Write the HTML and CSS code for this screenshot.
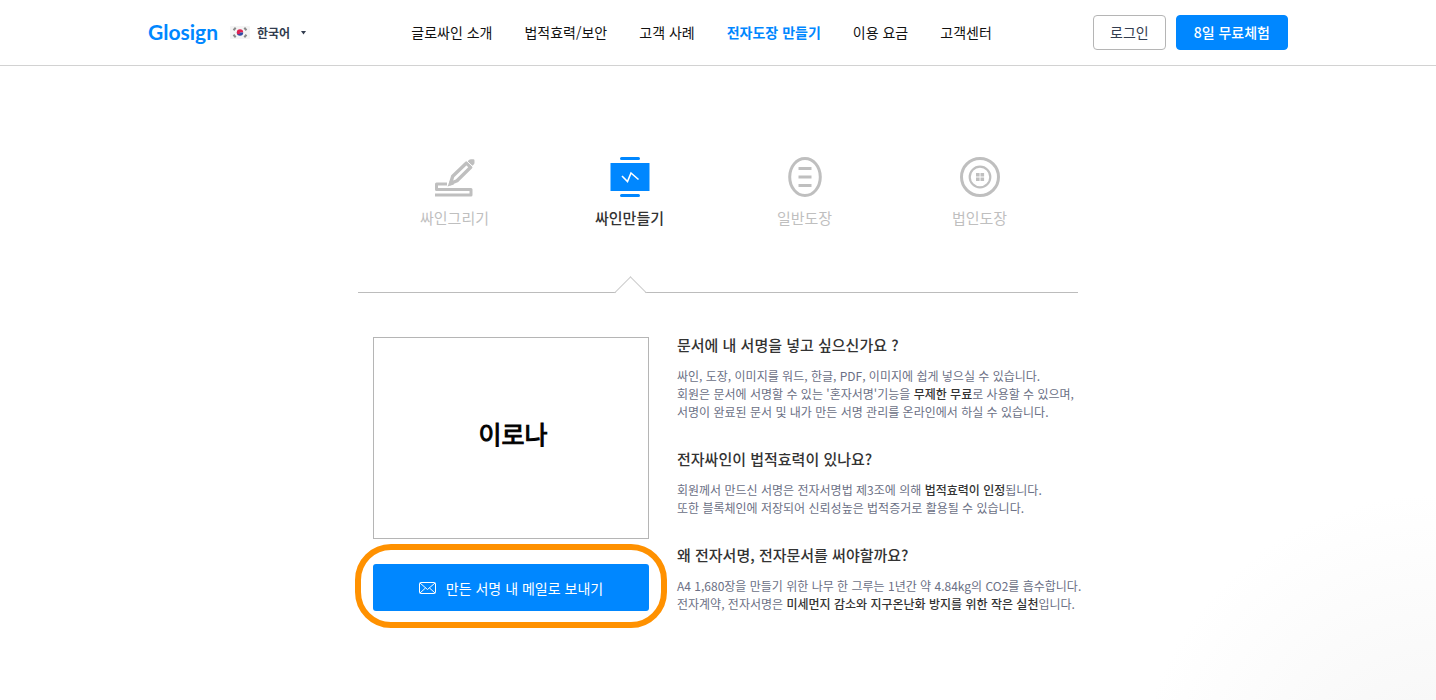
FILE: index.html
```html
<!DOCTYPE html>
<html lang="ko">

<head>
    <meta charset="UTF-8">
    <meta name="viewport" content="width=device-width, initial-scale=1">
    <title>Glosign</title>
    <link rel="stylesheet" href="styles.css">
</head>

<body>
    <!--header-->
    <header class="header">
        <div class="header-inner">
            <div class="brand">
                <a class="logo" href="#">Glosign</a>
                <div class="lang">
                    <svg class="flag" viewBox="0 0 20 13" aria-hidden="true">
                        <rect width="20" height="13" rx="1" fill="#f4f4f4"/>
                        <path d="M6.8 6.5a3.2 3.2 0 0 1 6.4 0z" fill="#e0204f"/>
                        <path d="M6.8 6.5a3.2 3.2 0 0 0 6.4 0z" fill="#2f4aa5"/>
                        <circle cx="8.4" cy="6.7" r="1.6" fill="#e0204f"/>
                        <path d="M3.500 4.200l2.200-2.400M14.300 1.800l2.200 2.400M3.500 8.800l2.200 2.400M14.300 11.200l2.200-2.400" stroke="#8a8a8a" stroke-width="2"/>
                    </svg>
                    <select class="lang-select" aria-label="언어">
                        <option>한국어</option>
                    </select>
                    <svg class="caret" viewBox="0 0 5 4" aria-hidden="true"><path d="M0 0h5L2.500 3.500z" fill="#333d4f"/></svg>
                </div>
            </div>
            <nav class="nav">
                <a href="#">글로싸인 소개</a>
                <a href="#">법적효력/보안</a>
                <a href="#">고객 사례</a>
                <a class="on" href="#">전자도장 만들기</a>
                <a href="#">이용 요금</a>
                <a href="#">고객센터</a>
            </nav>
            <div class="account">
                <button class="btn login" type="button">로그인</button>
                <button class="btn trial" type="button">8일 무료체험</button>
            </div>
        </div>
    </header>
    <!--header end-->

    <main class="main">
        <!--tabs-->
        <nav class="tabs">
            <a class="tab" href="#">
                <svg viewBox="0 0 40 40" fill="none" stroke="#bfbfbf" stroke-width="3">
                    <path d="M12 27H1.500v5.500H36V38H0" stroke-linejoin="round"/>
                    <path d="M15.500 26.500l2.200-7.200L31.500 6l4.200 4.200L22 23.800z" stroke-width="3.400" stroke-linejoin="round"/>
                    <path d="M12.500 29.500l2.500-6 4 4z" fill="#bfbfbf" stroke="none"/>
                    <path d="M32.500 4.500l1.200-1.200Q34.600 2.200 36 2.200h2.200q1.300 0 1.300 1.300v2.300q0 1-.8 1.800l-1.200 1.200z" fill="#bfbfbf" stroke="none"/>
                    <path d="M31.200 3.300l7 7" stroke="#fff" stroke-width="1"/>
                </svg>
                <span>싸인그리기</span>
            </a>
            <a class="tab active" href="#">
                <svg viewBox="0 0 40 40" fill="none">
                    <path d="M11.500 1.500h17M11.500 38.500h17" stroke="#0087ff" stroke-width="3" stroke-linecap="round"/>
                    <rect x=".5" y="6" width="39" height="28" fill="#0087ff"/>
                    <path d="M12 19l5.500 5.500 3.500-8.500 7.500 6.500" stroke="#fff" stroke-width="1.600"/>
                </svg>
                <span>싸인만들기</span>
            </a>
            <a class="tab" href="#">
                <svg viewBox="0 0 40 40" fill="none" stroke="#bfbfbf" stroke-width="3">
                    <ellipse cx="20" cy="20" rx="15.300" ry="18.500"/>
                    <path d="M13.500 11.500h13M13.500 20h13M13.500 28.500h13"/>
                </svg>
                <span>일반도장</span>
            </a>
            <a class="tab" href="#">
                <svg viewBox="0 0 40 40" fill="none" stroke="#bfbfbf">
                    <circle cx="20" cy="20" r="18.500" stroke-width="3"/>
                    <circle cx="20" cy="20" r="10.300" stroke-width="2.200"/>
                    <path d="M16 16h3.600v3.600H16zM20.500 16h3.600v3.600h-3.600zM16 20.500h3.600v3.600H16zM20.500 20.500h3.600v3.600h-3.600z" fill="#bfbfbf" stroke="none"/>
                </svg>
                <span>법인도장</span>
            </a>
        </nav>
        <!--tabs end-->

        <section class="content">
            <div class="maker">
                <div class="preview">이로나</div>
                <div class="highlight">
                    <button class="send" type="button">
                        <svg viewBox="0 0 17 12" fill="none" stroke="#fff">
                            <rect x=".5" y=".5" width="16" height="11" rx="1"/>
                            <path d="M1 1l7.500 6.500L16 1M1 11l5.500-5M16 11l-5.500-5"/>
                        </svg>
                        만든 서명 내 메일로 보내기
                    </button>
                </div>
            </div>
            <div class="guide">
                <article>
                    <h2>문서에 내 서명을 넣고 싶으신가요 ?</h2>
                    <p>싸인, 도장, 이미지를 워드, 한글, PDF, 이미지에 쉽게 넣으실 수 있습니다.<br>
                        회원은 문서에 서명할 수 있는 '혼자서명'기능을 <strong>무제한 무료</strong>로 사용할 수 있으며,<br>
                        서명이 완료된 문서 및 내가 만든 서명 관리를 온라인에서 하실 수 있습니다.</p>
                </article>
                <article>
                    <h2>전자싸인이 법적효력이 있나요?</h2>
                    <p>회원께서 만드신 서명은 전자서명법 제3조에 의해 <strong>법적효력이 인정</strong>됩니다.<br>
                        또한 블록체인에 저장되어 신뢰성높은 법적증거로 활용될 수 있습니다.</p>
                </article>
                <article>
                    <h2>왜 전자서명, 전자문서를 써야할까요?</h2>
                    <p>A4 1,680장을 만들기 위한 나무 한 그루는 1년간 약 4.84kg의 CO2를 흡수합니다.<br>
                        전자계약, 전자서명은 <strong>미세먼지 감소와 지구온난화 방지를 위한 작은 실천</strong>입니다.</p>
                </article>
            </div>
        </section>
    </main>
</body>

</html>
```
FILE: styles.css
```css
* {
    box-sizing: border-box;
}

body {
    margin: 0;
    min-height: 100vh;
    font-family: "Noto Sans CJK KR", sans-serif;
    font-size: 14px;
    color: #111;
    background: #fff radial-gradient(circle at 100% calc(100% + 94px), #f5f5f5 0, #fff 300px) no-repeat;
}

a {
    color: inherit;
    text-decoration: none;
}

button,
select {
    font-family: inherit;
    cursor: pointer;
}

/*header*/
.header {
    border-bottom: 1px solid #d2d2d2;
    background: #fff;
}

.header-inner {
    max-width: 1140px;
    height: 65px;
    margin: 0 auto;
    display: flex;
    align-items: center;
    justify-content: space-between;
}

.brand,
.lang,
.account {
    display: flex;
    align-items: center;
}

.brand {
    gap: 12px;
}

.logo {
    font-family: Lato, sans-serif;
    font-size: 21px;
    font-weight: 700;
    line-height: 28px;
    padding-bottom: 2px;
    color: #0087ff;
}

.lang {
    position: relative;
}

.flag {
    width: 20px;
    height: 13px;
}

.lang-select {
    appearance: none;
    border: 0;
    background: none;
    width: 60px;
    padding: 0 0 0 7px;
    font-size: 12px;
    font-weight: 700;
    color: #333d4f;
}

.caret {
    position: absolute;
    right: 4px;
    width: 5px;
    height: 4px;
    pointer-events: none;
}

.nav {
    display: flex;
    gap: 32px;
    padding-bottom: 2px;
    line-height: 20px;
    white-space: nowrap;
}

.nav .on {
    color: #0087ff;
    font-weight: 700;
}

.account {
    gap: 10px;
}

.btn {
    height: 35px;
    padding: 0 16px 2px;
    border: 1px solid #b5b5b5;
    border-radius: 4px;
    background: #fff;
    font-size: 14px;
    color: #333d4f;
    white-space: nowrap;
}

.trial {
    padding: 0 17px 2px;
    border-color: #0087ff;
    background: #0087ff;
    color: #fff;
    font-weight: 500;
}

/*tabs*/
.main {
    max-width: 720px;
    margin: 0 auto;
    padding-top: 91px;
}

.tabs {
    display: flex;
    padding: 0 11px 0 9px;
    border-bottom: 1px solid #bcbcbc;
}

.tab {
    flex: 1;
    position: relative;
    display: flex;
    flex-direction: column;
    align-items: center;
    gap: 10px;
    padding-bottom: 63px;
    font-size: 15px;
    line-height: 22px;
    color: #bfbfbf;
}

.tab svg {
    width: 40px;
    height: 40px;
}

.tab.active {
    color: #333;
    font-weight: 500;
}

/*arrow over the line*/
.tab.active::after {
    content: '';
    position: absolute;
    bottom: -12px;
    left: calc(50% - 11px);
    width: 22px;
    height: 22px;
    border: 1px solid #ccc;
    border-right: 0;
    border-bottom: 0;
    background: linear-gradient(135deg, #fff 52%, transparent 52%);
    transform: rotate(45deg);
}

/*content*/
.content {
    display: flex;
    gap: 28px;
    padding: 41px 0 60px 15px;
}

.maker {
    width: 276px;
    flex-shrink: 0;
    padding-top: 3px;
}

.preview {
    height: 202px;
    display: flex;
    align-items: center;
    justify-content: center;
    padding: 0 0 10px 4px;
    border: 1px solid #b5b5b5;
    background: #fff;
    font-size: 25px;
    color: #000;
    -webkit-text-stroke: 1px #000;
}

.highlight {
    margin: 5px -18px 0;
    padding: 14px 12px 11px;
    border: 6px solid #ff9100;
    border-radius: 36px;
}

.send {
    width: 100%;
    height: 47px;
    display: flex;
    align-items: center;
    justify-content: center;
    gap: 10px;
    border: 0;
    border-radius: 3px;
    background: #0087ff;
    color: #fff;
    font-size: 14px;
}

.send svg {
    width: 17px;
    height: 12px;
}

.guide {
    display: flex;
    flex-direction: column;
    gap: 27px;
    white-space: nowrap;
}

.guide h2 {
    margin: 0 0 11px;
    font-size: 15px;
    line-height: 22px;
    font-weight: 500;
    color: #333;
}

.guide p {
    margin: 0;
    font-size: 12px;
    line-height: 18px;
    color: #6b7085;
}

.guide strong {
    font-weight: 500;
    color: #333;
}
```
